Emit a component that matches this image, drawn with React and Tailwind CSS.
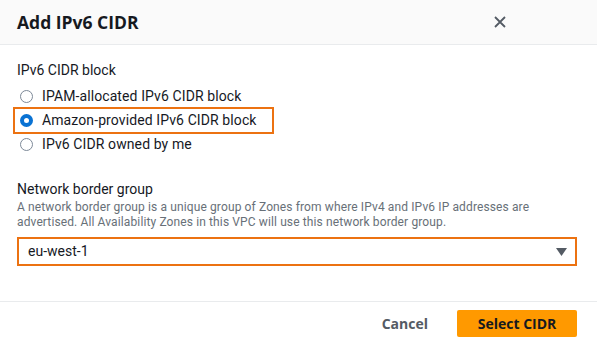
import React, { useState } from 'react';

const OPTIONS = [
  'IPAM-allocated IPv6 CIDR block',
  'Amazon-provided IPv6 CIDR block',
  'IPv6 CIDR owned by me',
];

function Radio({ checked }) {
  return checked ? (
    <span className="h-[13px] w-[13px] shrink-0 rounded-full border-[4px] border-[#0972d3] bg-white" />
  ) : (
    <span className="h-[13px] w-[13px] shrink-0 rounded-full border-[1.5px] border-[#7d8998] bg-white" />
  );
}

export default function App() {
  const [selected, setSelected] = useState(1);

  return (
    <div className="h-[345px] w-[597px] overflow-hidden bg-white text-[#000716]" style={{ fontFamily: 'Roboto, "Open Sans", sans-serif' }}>
      {/* Header */}
      <div className="flex h-[45px] items-center justify-between border-b border-[#e9ebed] bg-[#fafafa] pl-[17px] pr-[91px]">
        <h1 className="text-[17.5px] font-bold text-[#16191f]" style={{ fontFamily: '"Open Sans", Roboto, sans-serif' }}>Add IPv6 CIDR</h1>
        <button className="text-[#545b64]">
          <svg width="12" height="12" viewBox="0 0 12 12" fill="none" stroke="currentColor" strokeWidth="1.8">
            <path d="M1 1l10 10M11 1L1 11" />
          </svg>
        </button>
      </div>

      {/* Body */}
      <div className="px-[17px] pt-[16px]">
        <div className="text-[14px] leading-[18px] text-[#16191f]">IPv6 CIDR block</div>
        <div className="mt-[5px] flex flex-col">
          {OPTIONS.map((opt, i) => (
            <div key={opt} className="-ml-[4px] flex h-[24px] w-fit items-center">
              <label
                onClick={() => setSelected(i)}
                className={`flex h-[27px] cursor-pointer items-center gap-[9px] pl-[5px] pr-[15px] tracking-[0.1px] ${i === 1 ? 'border-2 border-[#ec7211]' : 'border-2 border-transparent'}`}
              >
                <Radio checked={selected === i} />
                <span className="text-[14px] text-[#16191f]">{opt}</span>
              </label>
            </div>
          ))}
        </div>

        <div className="mt-[24px] text-[14px] leading-[18px] text-[#16191f]">Network border group</div>
        <p className="mt-[2px] text-[12px] leading-[15px] tracking-[0.12px] text-[#687078]">
          A network border group is a unique group of Zones from where IPv4 and IPv6 IP addresses are advertised. All Availability Zones in this VPC will use this network border group.
        </p>
        <div className="mt-[7px] flex h-[29px] w-[560px] items-center justify-between border-2 border-[#ec7211] pl-[9px] pr-[8px]">
          <span className="text-[14px] text-[#16191f]">eu-west-1</span>
          <svg width="11" height="8" viewBox="0 0 11 8" className="text-[#545b64]">
            <path d="M0 0h11L5.5 8z" fill="currentColor" />
          </svg>
        </div>
      </div>

      {/* Footer */}
      <div className="mt-[35px] border-t border-[#e9ebed]" />
      <div className="flex items-center justify-end gap-[15px] pr-[20px] pt-[8px]">
        <button className="px-[14px] text-[14px] font-bold text-[#545b64]" style={{ fontFamily: '"Open Sans", Roboto, sans-serif' }}>Cancel</button>
        <button className="h-[27px] w-[120px] rounded-[2px] bg-[#ff9900] text-[14px] font-bold text-[#16191f]" style={{ fontFamily: '"Open Sans", Roboto, sans-serif' }}>Select CIDR</button>
      </div>
    </div>
  );
}
